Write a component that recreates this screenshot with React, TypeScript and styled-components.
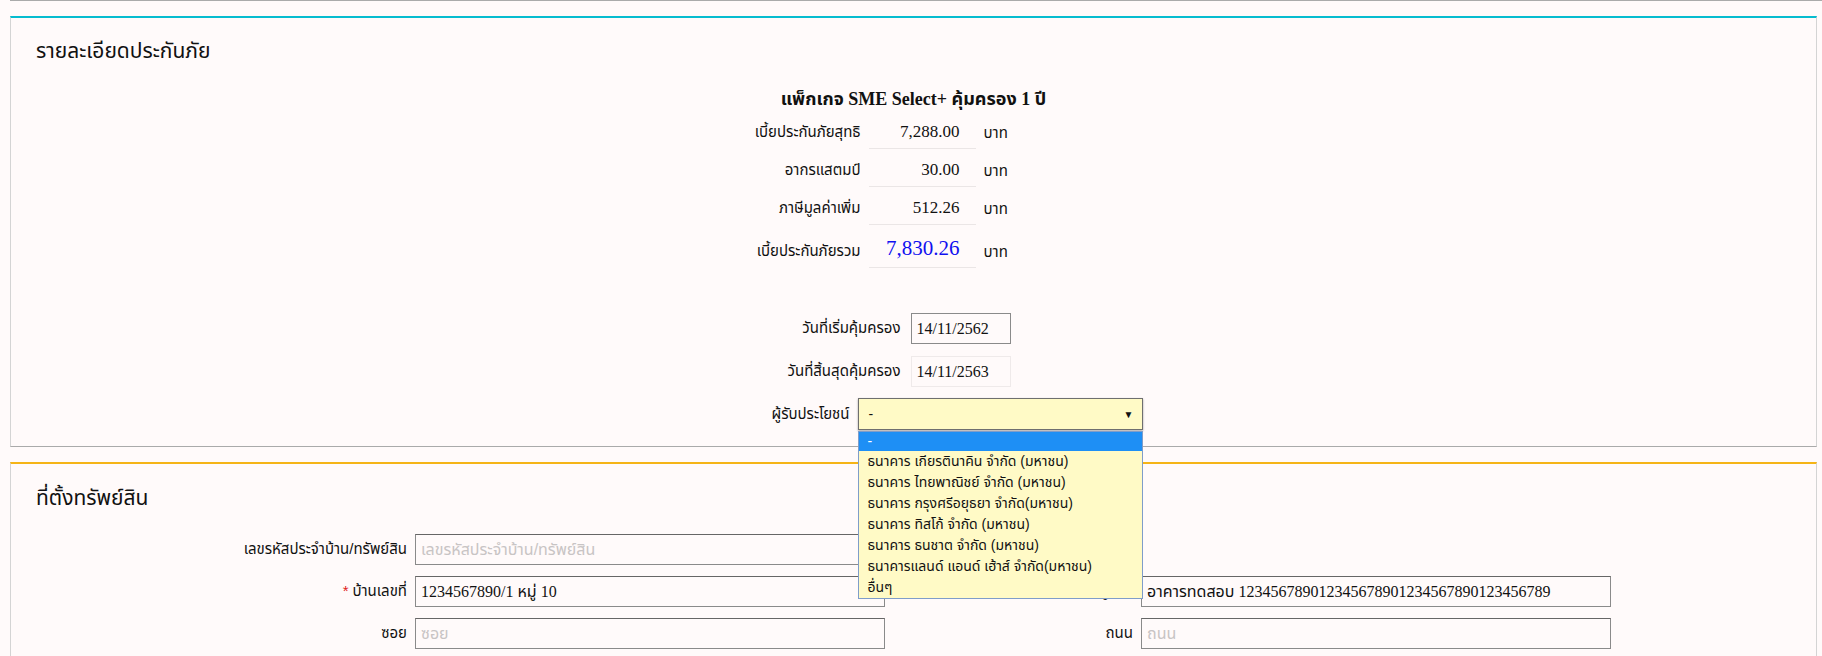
import React from "react";
import styled, { createGlobalStyle } from "styled-components";

const GlobalStyle = createGlobalStyle`
  html, body {
    margin: 0;
    padding: 0;
    background: #fffafa;
  }
  body {
    font-family: "Liberation Serif", "Noto Sans Thai", "Loma", "Garuda", "Tlwg Typo", serif;
    color: #111;
  }
`;

const Page = styled.div`
  width: 1822px;
  height: 656px;
  overflow: hidden;
  background: #fffafa;
`;

const TopRule = styled.div`
  margin-left: 10px;
  height: 0;
  border-bottom: 1px solid #aaa;
`;

const Panel = styled.section<{ $accent: string; $raised?: boolean }>`
  position: relative;
  z-index: ${(p) => (p.$raised ? 2 : 1)};
  margin: 15px 5px 0 10px;
  border: 1px solid #d4d4d4;
  border-top: 2px solid ${(p) => p.$accent};
  border-bottom-color: #aaa;
  background: #fffafa;
  display: flex;
  flex-direction: column;
`;

const PanelTitle = styled.h3<{ $top: number }>`
  margin: ${(p) => p.$top}px 0 0 25px;
  font-family: "Liberation Sans", "Noto Sans Thai", "Loma", sans-serif;
  font-size: 21px;
  line-height: 24px;
  font-weight: normal;
  color: #111;
`;

const PackageTitle = styled.div`
  margin-top: 24px;
  text-align: center;
  font-size: 18px;
  line-height: 24px;
  font-weight: bold;
`;

const PremiumTable = styled.div`
  align-self: center;
  width: 426px;
  display: grid;
  grid-template-columns: 160px 107px 143px;
  column-gap: 8px;
`;

const PremiumLabel = styled.div<{ $total?: boolean }>`
  padding: 10px 0 5px;
  line-height: 22px;
  font-size: 15px;
  text-align: right;
  align-self: ${(p) => (p.$total ? "end" : "stretch")};
  font-family: "Liberation Sans", "Noto Sans Thai", "Loma", sans-serif;
  border-bottom: 1px solid transparent;
`;

const PremiumValue = styled.div<{ $total?: boolean }>`
  padding: 10px 16px 5px 0;
  line-height: ${(p) => (p.$total ? "27px" : "22px")};
  font-size: ${(p) => (p.$total ? "21px" : "17px")};
  text-align: right;
  color: ${(p) => (p.$total ? "#1010f0" : "#111")};
  border-bottom: 1px solid #ebe6e6;
`;

const PremiumUnit = styled.div`
  padding: 10px 0 5px;
  line-height: 22px;
  font-size: 15px;
  font-family: "Liberation Sans", "Noto Sans Thai", "Loma", sans-serif;
  align-self: end;
`;

const DateGrid = styled.div`
  align-self: center;
  margin-top: 45px;
  width: 426px;
  display: grid;
  grid-template-columns: 200px 216px;
  column-gap: 10px;
  row-gap: 12px;
  align-items: center;
`;

const FieldLabel = styled.label<{ $pad?: number }>`
  text-align: right;
  padding-right: ${(p) => p.$pad ?? 0}px;
  font-family: "Liberation Sans", "Noto Sans Thai", "Loma", sans-serif;
  font-size: 15px;
  color: #111;
  white-space: nowrap;
`;

const Req = styled.span`
  color: #e02020;
  margin-right: 4px;
`;

const DateBox = styled.div<{ $readonly?: boolean }>`
  box-sizing: border-box;
  width: 100px;
  height: 31px;
  padding: 0 5px;
  display: flex;
  align-items: center;
  font-size: 16px;
  border: 1px solid ${(p) => (p.$readonly ? "#efeaea" : "#8a8a8a")};
  background: #fffafa;
`;

const BeneficiaryRow = styled.div`
  align-self: center;
  margin: 11px 0 16px;
  width: 666px;
  display: grid;
  grid-template-columns: 269px 285px 96px;
  column-gap: 8px;
  align-items: center;
`;

const SelectWrap = styled.div`
  position: relative;
`;

const SelectBox = styled.div`
  box-sizing: border-box;
  height: 32px;
  padding: 0 8px 0 10px;
  display: flex;
  align-items: center;
  justify-content: space-between;
  background: #fffac6;
  border: 1px solid #6f6f6f;
  box-shadow: 0 1px 2px rgba(0, 0, 0, 0.35);
  font-family: "Liberation Sans", "Noto Sans Thai", "Loma", sans-serif;
  font-size: 14px;
`;

const Arrow = styled.span`
  font-size: 10px;
  color: #111;
`;

const Menu = styled.ul`
  position: absolute;
  z-index: 10;
  top: 100%;
  left: 0;
  right: 0;
  margin: 1px 0 0;
  padding: 0;
  list-style: none;
  background: #fffac6;
  border: 1px solid #7f9dc9;
  font-family: "Liberation Sans", "Noto Sans Thai", "Loma", sans-serif;
  font-size: 14px;
`;

const MenuItem = styled.li<{ $active?: boolean }>`
  height: ${(p) => (p.$active ? "19px" : "21px")};
  line-height: ${(p) => (p.$active ? "19px" : "21px")};
  padding: 0 9px;
  white-space: nowrap;
  background: ${(p) => (p.$active ? "#1e8ff5" : "transparent")};
  color: ${(p) => (p.$active ? "#fff" : "#111")};
`;

const AddressGrid = styled.div`
  margin: 24px 0 40px;
  display: grid;
  grid-template-columns: 396px 470px 240px 470px;
  column-gap: 8px;
  row-gap: 11px;
  align-items: center;
`;

const TextBox = styled.div<{ $placeholder?: boolean }>`
  box-sizing: border-box;
  height: 31px;
  padding: 0 5px;
  display: flex;
  align-items: center;
  border: 1px solid #8a8a8a;
  border-top-color: #666;
  background: #fffafa;
  font-size: 16px;
  white-space: nowrap;
  overflow: hidden;
  color: ${(p) => (p.$placeholder ? "#c8c4c4" : "#111")};
  font-family: ${(p) =>
    p.$placeholder
      ? `"Liberation Sans", "Noto Sans Thai", "Loma", sans-serif`
      : `"Liberation Serif", "Noto Sans Thai", "Loma", serif`};
`;

const Empty = styled.div``;

const premiums = [
  { label: "เบี้ยประกันภัยสุทธิ", value: "7,288.00" },
  { label: "อากรแสตมป์", value: "30.00" },
  { label: "ภาษีมูลค่าเพิ่ม", value: "512.26" },
];

const banks = [
  "ธนาคาร เกียรตินาคิน จำกัด (มหาชน)",
  "ธนาคาร ไทยพาณิชย์ จำกัด (มหาชน)",
  "ธนาคาร กรุงศรีอยุธยา จำกัด(มหาชน)",
  "ธนาคาร ทิสโก้ จำกัด (มหาชน)",
  "ธนาคาร ธนชาต จำกัด (มหาชน)",
  "ธนาคารแลนด์ แอนด์ เฮ้าส์ จำกัด(มหาชน)",
  "อื่นๆ",
];

export default function App() {
  return (
    <Page>
      <GlobalStyle />
      <TopRule />
      <Panel $accent="#06bccf" $raised>
        <PanelTitle $top={21}>รายละเอียดประกันภัย</PanelTitle>
        <PackageTitle>แพ็กเกจ SME Select+ คุ้มครอง 1 ปี</PackageTitle>
        <PremiumTable>
          {premiums.map((r) => (
            <React.Fragment key={r.label}>
              <PremiumLabel>{r.label}</PremiumLabel>
              <PremiumValue>{r.value}</PremiumValue>
              <PremiumUnit>บาท</PremiumUnit>
            </React.Fragment>
          ))}
          <PremiumLabel $total>เบี้ยประกันภัยรวม</PremiumLabel>
          <PremiumValue $total>7,830.26</PremiumValue>
          <PremiumUnit>บาท</PremiumUnit>
        </PremiumTable>
        <DateGrid>
          <FieldLabel>วันที่เริ่มคุ้มครอง</FieldLabel>
          <DateBox>14/11/2562</DateBox>
          <FieldLabel>วันที่สิ้นสุดคุ้มครอง</FieldLabel>
          <DateBox $readonly>14/11/2563</DateBox>
        </DateGrid>
        <BeneficiaryRow>
          <FieldLabel>ผู้รับประโยชน์</FieldLabel>
          <SelectWrap>
            <SelectBox>
              <span>-</span>
              <Arrow>▼</Arrow>
            </SelectBox>
            <Menu>
              <MenuItem $active>-</MenuItem>
              {banks.map((b) => (
                <MenuItem key={b}>{b}</MenuItem>
              ))}
            </Menu>
          </SelectWrap>
          <Empty />
        </BeneficiaryRow>
      </Panel>
      <Panel $accent="#f5b416">
        <PanelTitle $top={22}>ที่ตั้งทรัพย์สิน</PanelTitle>
        <AddressGrid>
          <FieldLabel>เลขรหัสประจำบ้าน/ทรัพย์สิน</FieldLabel>
          <TextBox $placeholder>เลขรหัสประจำบ้าน/ทรัพย์สิน</TextBox>
          <Empty />
          <Empty />
          <FieldLabel>
            <Req>*</Req>บ้านเลขที่
          </FieldLabel>
          <TextBox>1234567890/1 หมู่ 10</TextBox>
          <FieldLabel>อาคาร/หมู่บ้าน</FieldLabel>
          <TextBox>อาคารทดสอบ 123456789012345678901234567890123456789</TextBox>
          <FieldLabel>ซอย</FieldLabel>
          <TextBox $placeholder>ซอย</TextBox>
          <FieldLabel>ถนน</FieldLabel>
          <TextBox $placeholder>ถนน</TextBox>
        </AddressGrid>
      </Panel>
    </Page>
  );
}
